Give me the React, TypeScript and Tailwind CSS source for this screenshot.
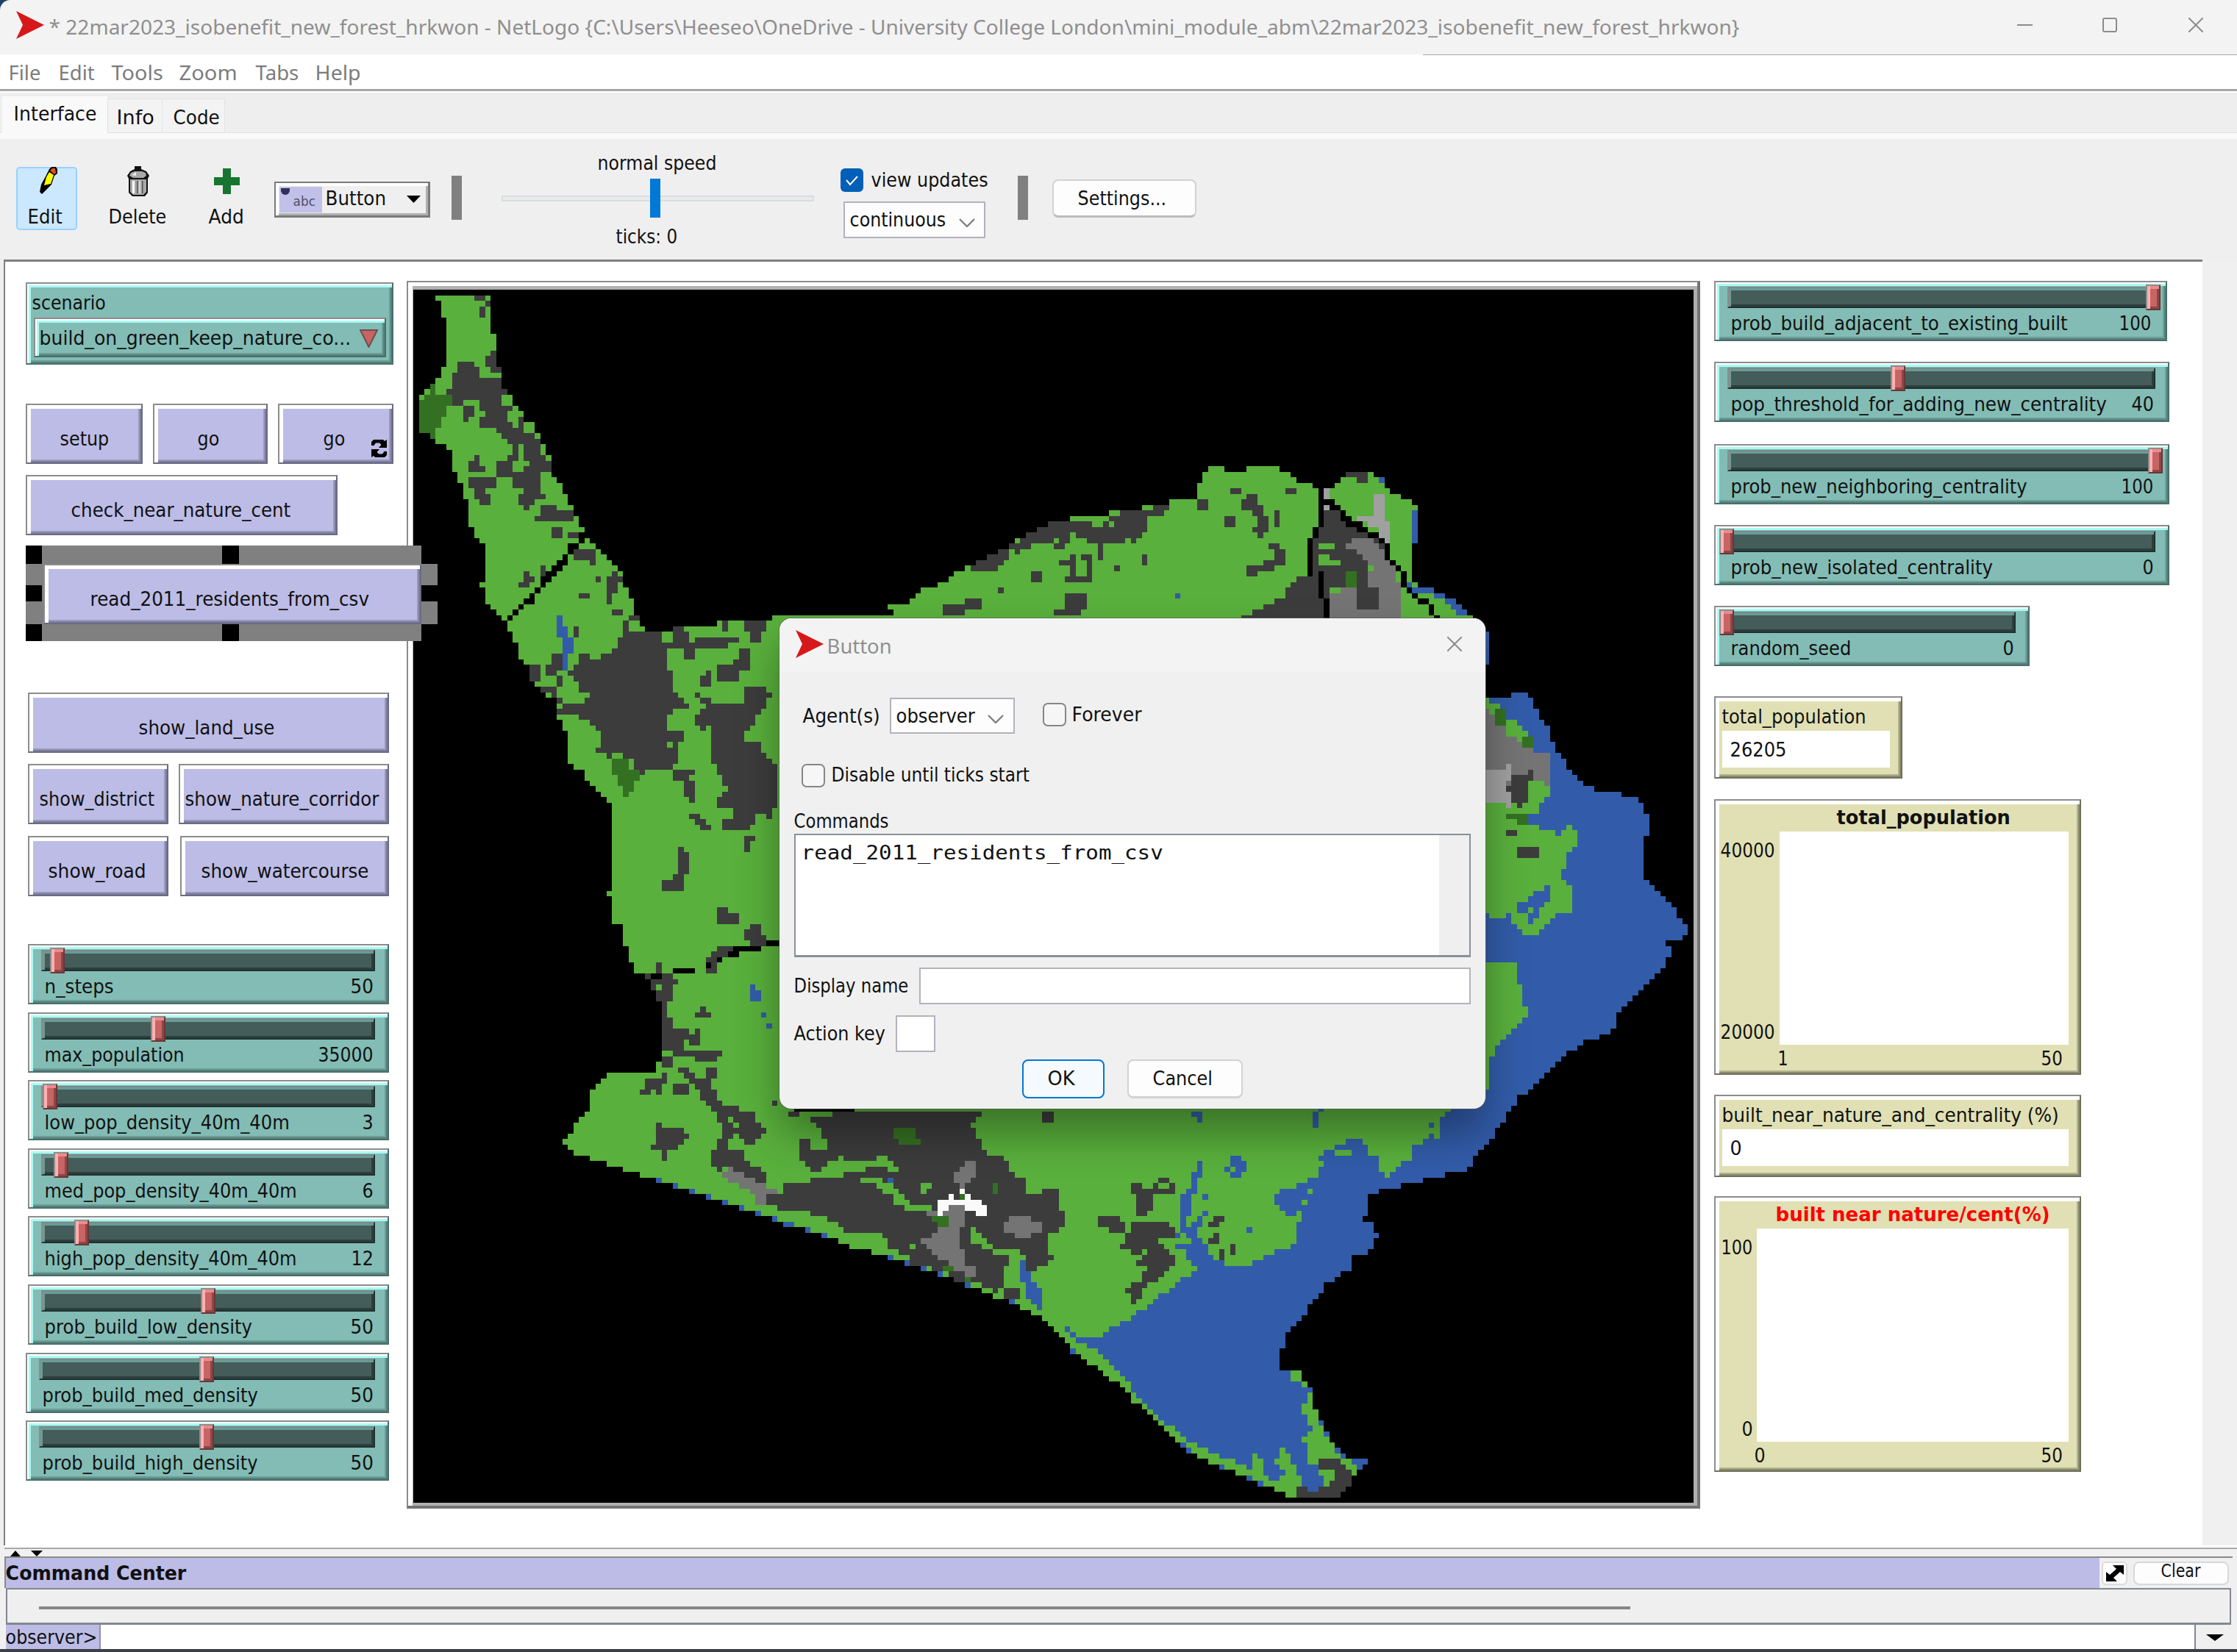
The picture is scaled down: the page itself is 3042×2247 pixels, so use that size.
import { useLayoutEffect, useRef, useState } from "react";
import type { ReactNode } from "react";

/* ---------- Patch world: polygons rasterised onto the NetLogo grid ---------- */

const COLS = 232;
const ROWS = 220;
const CELL = 7.5;
const world = new Uint8Array(COLS * ROWS);
const PALETTE = ["#000000", "#59b03c", "#3c3c3c", "#347022", "#747474", "#a0a0a0", "#325ca9", "#fafafa"];
const [BLACK, GREEN, DARK, FOREST, GREY, LIGHT, BLUE, WHITE] = [0, 1, 2, 3, 4, 5, 6, 7];

// Every sheet has its own origin and drawing scale: [x, y, scaleX, scaleY]
type Sheet = [number, number, number, number];
const NW: Sheet = [550, 380, 2.529, 1.568];
const SW: Sheet = [750, 1300, 1.568, 2.063];
const E: Sheet = [1160, 600, 1.3635, 1.074];
const SE: Sheet = [1540, 1500, 3, 2.8];

const toCell = (s: Sheet, x: number, y: number) => [
  (s[0] + x / s[2] - 562.4) / CELL,
  (s[1] + y / s[3] - 393.9) / CELL,
];

function parse(s: Sheet, text: string) {
  const n = text.trim().split(/[\s,]+/).map(Number);
  const pts: number[][] = [];
  for (let i = 0; i + 1 < n.length; i += 2) pts.push(toCell(s, n[i], n[i + 1]));
  return pts;
}

function put(c: number, r: number, color: number) {
  if (c >= 0 && r >= 0 && c < COLS && r < ROWS) world[r * COLS + c] = color;
}

function poly(s: Sheet, color: number, text: string) {
  const p = parse(s, text);
  for (let r = 0; r < ROWS; r++) {
    const y = r + 0.5;
    const xs: number[] = [];
    for (let i = 0; i < p.length; i++) {
      const a = p[i];
      const b = p[(i + 1) % p.length];
      if (a[1] <= y !== b[1] <= y) xs.push(a[0] + ((y - a[1]) / (b[1] - a[1])) * (b[0] - a[0]));
    }
    xs.sort((m, n) => m - n);
    for (let k = 0; k + 1 < xs.length; k += 2)
      for (let c = Math.ceil(xs[k] - 0.5); c + 0.5 < xs[k + 1]; c++) put(c, r, color);
  }
}

function rects(s: Sheet, color: number, text: string) {
  const p = parse(s, text);
  for (let i = 0; i + 1 < p.length; i += 2) {
    const c0 = Math.round(p[i][0]);
    const r0 = Math.round(p[i][1]);
    const c1 = Math.max(c0 + 1, Math.round(p[i + 1][0]));
    const r1 = Math.max(r0 + 1, Math.round(p[i + 1][1]));
    for (let r = r0; r < r1; r++) for (let c = c0; c < c1; c++) put(c, r, color);
  }
}

function line(s: Sheet, color: number, text: string) {
  const p = parse(s, text);
  for (let i = 0; i + 1 < p.length; i++) {
    const n = Math.ceil(Math.max(Math.abs(p[i + 1][0] - p[i][0]), Math.abs(p[i + 1][1] - p[i][1]))) || 1;
    for (let k = 0; k <= n; k++)
      put(
        Math.floor(p[i][0] + ((p[i + 1][0] - p[i][0]) * k) / n),
        Math.floor(p[i][1] + ((p[i + 1][1] - p[i][1]) * k) / n),
        color,
      );
  }
}

function dots(s: Sheet, color: number, text: string) {
  for (const [x, y] of parse(s, text)) put(Math.floor(x), Math.floor(y), color);
}

// Land
poly(NW, GREEN, "108,34 297,34 297,116 316,116 316,187 335,187 335,235 354,246 372,246 374,270 392,270 410,300 448,306 450,328 467,328 469,352 487,352 489,376 505,376 506,422 525,422 543,435 545,457 562,459 564,482 581,484 583,505 600,507 602,528 619,530 619,540 600,545 600,565 620,563 622,552 640,552 640,563 657,575 695,587 714,598 733,610 735,622 752,633 754,657 771,657 773,680 790,682 792,715 808,727 830,745 850,752 942,752 960,740 1075,740 1077,728 1265,728 1265,717 1568,717 1568,1568 885,1568 885,1538 867,1538 865,1515 848,1515 846,1490 828,1480 792,1480 790,1457 771,1457 771,1422 752,1422 752,1375 714,1375 714,1316 695,1316 695,1304 714,1304 714,1115 695,1115 676,1092 638,1080 620,1068 620,1045 583,1045 564,1021 562,962 545,960 543,938 525,938 525,892 487,890 468,870 430,858 430,822 411,820 392,810 390,775 373,773 371,752 354,750 354,727 335,727 316,712 297,702 278,690 278,657 260,657 260,645 278,645 278,563 260,563 240,550 238,528 221,528 221,470 203,468 201,435 184,435 182,410 165,410 163,364 146,362 144,350 108,350 90,338 88,327 51,327 51,247 70,235 90,225 108,210 127,205 127,187 146,185 146,80 127,80 127,45 108,45");
poly(SW, GREEN, "165,0 520,0 520,430 1550,430 1550,1505 1520,1480 1490,1465 1460,1450 1425,1430 1390,1412 1365,1395 1345,1370 1320,1340 1295,1315 1270,1280 1240,1250 1215,1210 1185,1180 1165,1150 1130,1132 1115,1115 1100,1075 1060,1035 1010,985 955,960 915,940 885,925 830,895 795,880 760,863 720,848 650,820 585,790 540,770 475,740 440,725 400,705 365,690 330,678 295,660 225,630 165,605 130,590 95,573 60,558 36,545 24,525 24,515 36,510 48,495 48,468 70,450 83,437 83,377 95,360 118,340 120,329 224,327 224,298 236,290 236,128 224,125 212,80 200,62 200,50 178,48 178,18 165,18");
const EAST = "1220,375 1220,367 1250,367 1260,385 1270,400 1290,420 1300,445 1325,475 1350,497 1375,510 1400,515 1425,515 1455,525 1475,545 1475,575 1465,580 1465,632 1485,650 1525,680 1535,700 1547,707 1547,720 1530,730 1507,730 1507,737 1515,740 1507,765 1480,785 1420,835 1405,865 1375,872 1350,880 1310,905 1280,925 1220,970 1210,990 1180,1025 1150,1060 1130,1070 1060,1080 1010,1090 955,1100 945,1135 965,1140 965,1155 973,1162 955,1185 925,1190 920,1210 870,1235 840,1275 800,1305 790,1325 790,1357";
poly(E, GREEN, "0,255 75,255 65,240 105,235 125,215 175,205 205,185 250,170 285,155 315,140 345,125 390,115 430,110 495,102 550,95 585,88 635,82 640,68 650,50 660,38 690,38 690,45 730,45 730,38 790,38 800,45 825,58 850,65 880,68 905,60 912,48 935,40 945,45 975,50 985,65 1015,80 1035,90 1045,100 1045,150 1035,155 1035,200 1055,215 1075,215 1100,230 1120,240 1140,255 1173,275 1178,325 1173,375 " + EAST + " 545,1420 500,1385 460,1345 410,1335 380,1300 330,1270 270,1250 0,1150");
rects(E, BLACK, "1174,325 1180,372");

// Sea
poly(E, BLUE, "1173,375 " + EAST + " 790,1500 600,1445 550,1405 500,1365 450,1330 425,1318 410,1310 465,1308 480,1295 510,1285 545,1270 580,1250 610,1230 635,1212 640,1200 610,1180 600,1160 650,1175 660,1190 690,1203 740,1203 765,1190 820,1175 820,1145 830,1140 832,1115 850,1110 860,1090 865,1050 875,1040 905,1037 905,1025 945,1020 950,1035 975,1050 990,1075 1010,1065 1040,1045 1065,1025 1085,1010 1100,985 1115,975 1173,960 1178,905 1190,890 1210,870 1235,850 1250,840 1240,810 1230,765 1173,762 1173,690 1200,697 1215,690 1235,715 1255,725 1290,705 1300,690 1330,685 1330,650 1315,635 1325,605 1342,590 1342,565 1325,562 1310,575 1290,568 1255,560 1275,530 1290,515 1290,460 1265,440 1250,430 1235,415 1210,400 1195,385");
rects(E, BLUE, "597,222 606,230 975,52 985,60 1037,100 1045,150 1173,280 1180,325 392,1295 402,1302 400,1305 410,1312 1025,207 1040,214 1040,214 1078,220 1078,222 1098,230 1098,230 1115,238 1108,237 1128,245 1120,245 1140,252");
poly(E, BLUE, "1230,672 1265,665 1265,655 1290,652 1290,670 1270,685 1270,700 1245,705 1250,690 1262,680 1230,690");
poly(SW, BLUE, "1000,855 1010,855 1010,870 1022,900 1022,915 1034,915 1034,930 1047,933 1047,992 1034,992 1034,975 1010,960 1010,915 1000,912");
poly(NW, BLUE, "525,716 543,716 543,740 562,740 562,763 581,763 581,797 562,797 562,832 525,832 525,820 543,820 543,763 525,763 525,750 543,740 525,740");
rects(NW, BLUE, "1188,1503 1208,1538 1208,1515 1225,1538");
rects(SW, BLUE, "447,158 458,173 458,190 470,205");

// Bay and headland
rects(SE, BLACK, "0,0 1565,1567");
const BAY = "1560,0 1560,10 1545,12 1545,32 1523,34 1523,75 1500,75 1500,96 1478,96 1478,138 1456,138 1456,159 1433,159 1433,180 1410,180 1410,202 1388,202 1388,243 1365,243 1365,264 1275,264 1275,285 1186,285 1186,306 1096,306 1096,327 1005,327 1005,348 960,348 960,432 938,432 938,453 982,453 982,495 1005,495 1005,516 982,516 982,558 960,558 960,579 893,579 893,642 848,642 848,663 825,663 825,684 780,684 780,726 757,726 757,747 735,747 735,768 712,768 712,810 690,810 690,831 667,831 667,852 645,852 645,873 622,873 622,936 600,936 600,1020 ";
poly(SE, GREEN, "0,0 " + BAY + "690,1020 690,1062 712,1062 712,1083 735,1083 735,1167 757,1167 757,1209 780,1209 780,1251 802,1251 802,1293 825,1293 825,1314 847,1314 847,1335 870,1335 870,1356 960,1356 960,1377 938,1377 938,1398 915,1398 915,1419 893,1419 893,1461 870,1461 870,1482 847,1482 847,1503 622,1503 622,1482 577,1482 577,1461 510,1461 510,1440 465,1440 465,1419 420,1419 420,1398 353,1398 353,1377 307,1377 307,1356 262,1356 262,1335 218,1335 218,1314 196,1314 196,1293 173,1293 173,1272 150,1272 150,1251 128,1251 128,1230 105,1230 105,1209 82,1209 82,1188 60,1188 60,1167 37,1167 37,1146 0,1146");
poly(SE, BLUE, "0,810 15,810 15,789 60,789 60,768 82,768 82,747 105,747 105,726 150,726 150,705 173,705 173,684 196,684 196,663 240,663 240,642 262,642 262,621 240,621 240,600 218,600 218,558 173,558 173,537 240,537 240,516 218,516 218,495 196,495 196,348 218,348 218,327 240,327 240,264 262,264 262,222 285,222 285,285 262,285 262,348 240,348 240,432 218,432 218,474 240,474 240,453 262,453 262,432 285,432 285,474 262,474 262,516 285,516 285,537 307,537 307,579 330,579 330,600 375,600 375,621 488,621 488,600 533,600 533,579 577,579 577,558 645,558 645,537 667,537 667,453 690,453 690,411 667,411 667,432 622,432 622,411 600,411 600,390 577,390 577,348 600,348 600,327 667,327 667,306 712,306 712,285 757,285 757,243 780,243 780,222 757,222 757,202 780,202 780,180 825,180 825,159 870,159 870,138 938,138 938,159 960,159 960,202 1005,202 1005,264 1028,264 1028,285 1050,285 1050,264 1073,264 1073,243 1096,243 1096,222 1141,222 1141,159 1186,159 1186,138 1208,138 1208,117 1253,117 1253,54 1275,54 1275,33 1298,33 1298,0 " + BAY + "645,1020 645,1062 690,1062 690,1083 735,1083 735,1104 712,1104 712,1146 690,1146 690,1188 712,1188 712,1230 735,1230 735,1251 712,1251 712,1272 690,1272 690,1293 712,1293 712,1377 757,1377 757,1419 780,1419 780,1461 757,1461 757,1482 712,1482 712,1461 690,1461 690,1419 667,1419 667,1377 645,1377 645,1335 622,1335 622,1314 600,1314 600,1356 577,1356 577,1377 600,1377 600,1398 622,1398 622,1419 600,1419 600,1440 555,1440 555,1419 533,1419 533,1356 510,1356 510,1335 488,1335 488,1398 465,1398 465,1377 420,1377 420,1356 353,1356 353,1335 307,1335 307,1314 262,1314 262,1293 218,1293 218,1272 196,1272 196,1251 173,1251 173,1230 128,1230 128,1209 105,1209 105,1188 82,1188 82,1167 60,1167 60,1146 37,1146 37,1125 15,1125 15,1104 0,1104");
rects(SE, BLUE, "240,22 262,54 262,33 285,75 735,22 757,96 757,12 780,33 397,202 442,285 442,222 465,264 375,243 397,264 285,348 307,369 285,411 307,432 465,474 488,495 173,495 196,516 1208,75 1230,96 757,1209 780,1230 780,1251 802,1272 825,1314 847,1335 847,1335 870,1356 893,1356 960,1377 915,1377 938,1398 196,1293 218,1314 218,1314 240,1335 353,1377 375,1398 465,1419 488,1440 510,1440 533,1461");
rects(SE, GREEN, "825,180 893,202 712,327 735,348 690,369 712,390 397,243 420,264 1208,96 1230,117 1230,117 1253,138 690,1062 712,1083");
poly(SE, DARK, "757,1356 847,1356 847,1377 870,1377 870,1398 893,1398 893,1461 870,1461 870,1482 847,1482 847,1503 667,1503 667,1461 712,1461 712,1482 757,1482 757,1461 802,1461 802,1440 825,1440 825,1398 757,1398");

// Built-up land, north west
poly(NW, DARK, "182,176 241,176 241,187 260,187 260,210 335,210 335,235 354,235 354,246 335,246 335,270 372,270 354,280 354,305 392,317 392,295 410,295 410,327 448,327 467,340 467,352 469,375 487,375 487,388 505,388 505,410 467,410 467,457 487,460 487,468 448,470 430,480 430,490 411,490 392,480 392,457 411,457 411,445 373,445 373,422 316,422 316,388 354,388 354,375 373,375 373,352 354,340 335,328 316,328 316,317 260,315 260,290 278,290 278,280 260,280 260,258 203,258 200,268 165,268 163,245 146,245 146,235 165,222 165,200 182,198");
poly(NW, GREEN, "392,352 411,352 411,388 430,388 430,398 392,410 354,400 373,388 392,388");
rects(NW, DARK, "241,34 278,45 278,45 297,57 260,57 278,80 506,528 543,550 564,540 600,550 467,610 487,633 657,633 676,645 600,668 638,680 714,705 752,716 583,740 600,763 525,845 543,868 525,892 543,905 1094,728 1112,750");
poly(NW, DARK, "297,152 316,152 316,187 335,187 335,200 316,200 297,187 278,187 278,163 297,163");
poly(NW, DARK, "203,268 241,268 241,292 221,292 221,304 203,304");
poly(NW, DARK, "221,388 241,388 241,376 260,376 260,388 278,400 278,410 221,410");
poly(NW, DARK, "221,422 316,422 316,445 278,445 278,457 297,457 297,480 260,480 241,468 241,445 221,445");
poly(NW, DARK, "467,482 525,482 525,493 581,493 581,516 448,516 448,505 467,505");
poly(NW, DARK, "581,575 657,575 657,608 638,608 638,598 581,598");
poly(NW, DARK, "411,622 430,622 430,633 448,633 448,645 430,645 430,657 392,657 392,647 411,647");
poly(NW, DARK, "714,622 733,622 733,633 752,633 752,645 733,645 733,668 714,668 714,692 695,692 695,633 714,633");
poly(NW, DARK, "752,728 771,728 771,716 808,716 808,728 780,728 771,740 790,752 885,752 885,775 923,775 923,763 942,763 923,752 923,740 960,740 980,752 980,775 1018,763 1055,763 1055,788 998,788 998,808 960,808 960,785 923,785 905,797 905,832 923,832 923,858 905,868 942,880 960,892 980,905 980,916 960,916 923,920 905,935 905,962 960,962 960,985 942,995 942,1030 923,1045 885,1045 867,1035 848,1045 828,1055 808,1055 790,1030 733,1010 714,1010 714,1020 695,1020 676,1005 657,1005 676,985 676,962 657,962 657,950 638,940 600,935 600,920 581,927 525,927 525,916 562,905 600,905 620,892 638,885 600,885 600,858 562,845 581,832 600,808 600,800 638,800 638,808 676,808 695,797 733,785 733,763 752,763");
rects(NW, GREEN, "885,752 923,773 905,985 923,997");
poly(NW, DARK, "430,822 467,822 467,845 448,858 430,845");
poly(NW, DARK, "468,870 525,868 525,892 487,880");
poly(NW, DARK, "487,832 506,800 543,800 543,820 525,840 487,845");
poly(NW, DARK, "1170,728 1245,728 1245,750 1225,752 1225,773 1190,773 1190,752 1170,750");
poly(NW, DARK, "1055,763 1150,763 1150,773 1112,773 1112,785 1055,785");
poly(NW, DARK, "1152,788 1188,788 1188,832 1150,832 1150,855 1075,855 1075,822 1130,822 1130,810 1152,810");
poly(NW, DARK, "1037,835 1055,835 1055,858 1037,868 1018,868 1018,845 1037,845");
poly(NW, DARK, "998,880 1018,880 1018,892 1055,892 1075,905 1150,905 1170,892 1150,880 1170,870 1245,870 1263,885 1245,892 1245,905 1225,916 1208,930 1208,950 1170,962 1170,985 1225,985 1225,1005 1263,1020 1263,1035 1290,1035 1290,1127 1263,1127 1263,1150 1225,1140 1208,1150 1188,1172 1094,1172 1094,1150 1130,1150 1130,1127 1075,1127 1075,1103 1112,1085 1094,1068 1075,1045 1055,1030 1055,950 1018,962 998,950 1018,935 998,935 998,927 1037,916 1037,905 998,892");
poly(NW, DARK, "923,1045 960,1045 960,1035 980,1045 998,1050 980,1060 998,1080 998,1115 980,1115 960,1103 960,1080 942,1068 923,1068");
poly(NW, DARK, "980,1140 1018,1140 1018,1150 1055,1162 1055,1172 1018,1172 998,1160 980,1150");
poly(NW, DARK, "1170,1186 1208,1186 1208,1197 1188,1197 1188,1220 1170,1220");
poly(NW, DARK, "942,1210 960,1210 960,1220 980,1220 980,1268 960,1268 960,1304 942,1304 942,1292 923,1304 885,1304 885,1280 923,1280 923,1268 942,1268");
poly(NW, DARK, "1075,1340 1112,1340 1112,1352 1150,1352 1150,1363 1130,1375 1075,1375");
poly(NW, DARK, "1170,1387 1208,1375 1225,1375 1225,1387 1245,1398 1263,1410 1245,1420 1208,1418 1170,1410");
poly(NW, DARK, "1037,1450 1075,1425 1150,1418 1130,1440 1075,1450 1055,1480 1037,1475");
line(NW, BLACK, "1290,1415 1250,1412");
line(NW, BLACK, "1225,1428 1150,1428 1122,1440");
dots(NW, BLACK, "1045,1463");
poly(NW, DARK, "867,1457 885,1457 885,1480 923,1480 923,1492 942,1500 923,1515 923,1538 905,1545 905,1568 885,1568 885,1538 867,1530 867,1515 848,1515 848,1492 828,1480 867,1480");
rects(NW, BLACK, "923,1468 998,1480 848,1480 885,1492");
line(NW, BLACK, "588,563 572,580 553,588 553,600 530,610 515,620 497,634 478,645 458,662 440,675 420,687 400,698 382,710 363,722");
line(NW, BLACK, "553,588 535,602 510,618 495,634");
poly(NW, FOREST, "90,222 108,222 108,235 127,247 163,247 163,268 146,268 146,290 127,292 127,315 108,317 108,338 90,338 90,327 51,327 51,258 70,247 90,235");
poly(NW, FOREST, "714,1021 771,1021 771,1035 790,1045 808,1055 808,1065 790,1070 790,1090 771,1103 752,1103 752,1090 733,1080 733,1055 714,1055");

// Built-up land, south west
poly(SW, DARK, "224,20 236,20 236,50 258,50 258,65 270,65 270,80 258,80 258,127 247,127 247,175 258,175 258,206 290,206 290,220 305,220 305,206 318,206 318,250 295,250 290,235 282,235 282,265 364,267 364,282 352,297 305,297 305,283 258,283 258,312 236,312 236,283 247,265 247,250 236,265 236,127 224,127 224,95 212,95 212,65 200,62 200,50 224,50");
rects(SW, GREEN, "236,265 258,283 224,80 236,95");
rects(SW, DARK, "330,0 352,20 330,35 352,50 506,430 528,452 470,405 482,422 1047,437 1070,467");
rects(SW, BLACK, "258,35 305,50 330,20 341,35 352,5 364,18 212,50 236,65");
poly(SW, DARK, "318,144 330,144 330,158 341,158 341,173 305,173 305,158 318,158");
poly(SW, DARK, "236,327 247,327 247,355 236,360 236,390 224,390 212,375 212,390 188,390 188,375 200,370 200,350 224,345");
poly(SW, DARK, "270,313 295,313 295,328 330,345 330,313 352,313 352,343 341,343 341,375 352,375 352,400 364,420 400,422 400,437 435,440 435,465 445,480 458,485 458,495 445,500 435,528 411,528 411,515 388,500 376,515 364,530 388,545 411,545 411,575 435,590 458,610 458,640 435,640 411,625 388,607 376,595 352,605 341,590 341,545 352,545 352,515 364,515 364,480 352,465 341,420 318,405 318,375 305,360 290,345 270,328");
poly(SW, DARK, "258,360 295,360 295,375 282,390 270,390 258,375");
poly(SW, DARK, "224,468 236,468 236,483 282,485 293,500 293,515 282,515 270,545 247,545 247,575 236,575 236,545 212,545 212,530 224,525");
rects(SW, GREEN, "376,452 388,467 388,467 400,483 388,530 400,545");
poly(SW, DARK, "490,640 555,640 555,625 625,622 625,610 670,610 670,592 705,595 740,605 740,592 716,562 693,562 680,577 635,577 620,565 600,577 575,592 575,607 553,607 553,592 530,575 530,515 553,515 553,545 588,545 588,530 576,500 565,470 553,452 588,452 600,437 650,435 650,430 928,430 916,452 905,455 893,480 905,485 905,515 916,515 928,560 963,562 975,577 975,607 1010,625 1010,670 1045,670 1045,655 1080,655 1080,715 1092,717 1092,762 1080,778 1058,778 1058,825 1068,840 1068,855 1045,865 1034,885 1010,885 1010,855 998,825 950,825 940,808 928,800 916,775 893,762 893,792 905,808 940,830 975,840 975,870 963,870 963,930 950,945 916,925 885,915 860,910 860,900 830,885 795,870 765,860 765,840 720,820 716,795 695,778 640,778 600,745 575,735 553,720 540,715 482,710 458,697 458,670 490,668");
poly(SW, GREEN, "660,622 705,622 716,640 740,655 753,670 765,685 775,700 810,705 820,715 755,715 740,700 730,685 716,665 705,655 680,635 660,635");
rects(SW, GREEN, "788,640 810,655 788,652 800,668 765,808 777,822");
rects(SW, BLUE, "424,80 435,127 435,95 447,127 718,622 730,637");
poly(SW, DARK, "963,945 975,930 998,930 998,960 975,965 963,955");
poly(SW, GREY, "376,592 388,592 388,607 411,607 411,622 435,622 435,640 458,640 458,655 482,655 482,670 458,670 458,700 435,700 435,670 411,655 388,640 376,625 364,610");
poly(SW, GREY, "882,577 905,577 905,622 893,622 893,640 870,640 858,630 858,607 870,605");
poly(SW, GREY, "848,700 882,700 882,760 870,770 870,822 882,830 882,855 893,870 905,880 905,900 882,900 870,885 848,870 835,855 823,845 812,822 800,810 788,800 800,790 823,775 823,760 848,755 848,730 812,730 800,720 823,715 835,700");
poly(SW, GREY, "975,732 1022,732 1022,747 1045,747 1045,775 1022,778 1022,792 987,792 987,778 963,775 963,747 975,745");
rects(SW, GREY, "870,640 882,655");
rects(SW, WHITE, "823,685 835,730 835,685 848,715 848,670 858,700 858,685 882,700 870,655 882,670 882,670 893,715 893,685 916,715 905,700 928,730");
rects(SW, FOREST, "730,485 775,515 740,512 788,528 940,640 952,668 870,670 882,685 812,732 847,747 823,747 847,760 835,870 858,885 882,900 893,915");
dots(SW, BLUE, "230,630 265,646 300,662 335,677 370,692 405,708 440,723 475,738 500,754 510,754 547,769 582,784 722,846 760,862 795,878 830,893 887,924 982,970 1110,1108");

// Built-up land, south
poly(SW, DARK, "1235,640 1258,640 1258,655 1282,655 1282,640 1294,640 1294,625 1318,625 1318,640 1330,640 1330,668 1305,668 1282,668 1282,700 1270,715 1270,728 1247,728 1247,670 1235,670");
rects(SE, GREEN, "105,306 150,327");
poly(SW, DARK, "1165,732 1212,732 1212,747 1224,747 1224,775 1200,778 1188,765 1165,762");
poly(SW, DARK, "1235,747 1318,747 1318,762 1330,765 1330,792 1294,795 1294,808 1318,820 1318,840 1330,855 1318,870 1318,885 1294,900 1282,915 1270,930 1258,945 1247,975 1235,975 1235,960 1224,945 1235,930 1235,915 1258,910 1258,885 1270,870 1247,860 1258,840 1270,825 1235,840 1235,825 1212,820 1224,795 1224,775 1235,770");
rects(SE, DARK, "330,432 375,453 307,453 353,474 330,495 353,516 307,516 353,537 353,558 375,600 397,537 420,579");

// North east
poly(E, DARK, "215,185 250,170 285,155 320,140 345,125 390,115 435,118 460,125 495,102 550,97 585,93 575,105 545,110 545,130 525,140 515,155 495,148 470,150 430,145 400,145 390,155 345,150 310,160 285,170 265,187 240,190");
rects(E, GREEN, "285,160 295,168 440,112 455,122 470,115 485,122 370,138 380,150 405,132 412,145 500,140 508,150");
rects(E, DARK, "400,165 410,195 385,175 400,185 420,165 445,172 395,195 440,203 430,175 440,195 270,213 280,222 330,190 350,203 535,165 545,180 485,182 495,190 640,85 660,98 690,107 708,123 780,100 790,123 700,68 718,76 800,68 820,76 730,182 750,197 455,150 465,170");
poly(E, DARK, "390,220 430,220 430,245 415,255 375,255 375,245 395,240");
poly(E, DARK, "170,237 205,240 205,232 240,232 240,243 215,243 205,252 170,250");
poly(E, DARK, "720,85 735,78 750,78 760,100 770,110 770,125 755,140 740,135 750,110 720,97");
poly(E, DARK, "770,145 790,150 800,165 800,178 780,185 755,190 750,180 785,172 770,155");
poly(E, DARK, "870,95 895,100 935,120 985,150 985,160 950,160 950,175 965,205 975,235 960,245 930,240 925,215 885,215 885,258 720,258 760,240 800,230 800,215 825,200 850,195 850,135 865,120");
poly(E, GREY, "920,140 960,145 985,160 1005,190 1017,215 1017,258 885,258 885,220 930,215 935,240 970,245 970,215 950,205 962,185 945,165 915,158");
rects(E, DARK, "935,210 973,243");
poly(E, LIGHT, "965,80 985,80 985,110 1000,130 1000,148 975,148 970,125 935,118 935,110 965,105");
rects(E, LIGHT, "873,68 883,85 873,93 883,100");
rects(E, FOREST, "915,190 935,210");
rects(E, GREEN, "865,150 890,158 860,165 878,180 885,172 903,182 1018,230 1030,258");
rects(E, DARK, "935,48 955,58 910,48 930,53");
line(E, BLACK, "868,60 867,90 866,120 853,140 848,150 846,195");
line(E, BLACK, "868,190 870,225 877,232 878,255");
line(E, BLACK, "878,85 900,98 920,112 955,135 985,152 1000,175 1018,195 1022,208 1048,230 1068,243 1085,255");
line(E, BLACK, "910,112 935,128");

// East coast
poly(E, GREY, "1173,390 1190,400 1215,430 1245,440 1265,455 1290,455 1290,510 1270,490 1250,500 1215,500 1200,475 1173,480");
poly(E, LIGHT, "1173,480 1215,475 1230,490 1210,500 1225,520 1215,532 1173,525");
poly(E, DARK, "1225,490 1260,480 1260,495 1245,500 1250,520 1235,535 1220,530 1212,505");
rects(E, FOREST, "1190,390 1215,412 1240,433 1265,450 1215,540 1250,548 1230,548 1250,555");
rects(E, DARK, "1210,568 1230,577 1230,595 1270,607");
rects(E, BLUE, "1262,440 1290,455 1255,540 1275,560");

const layers = PALETTE.map((_, color) => {
  let d = "";
  if (color === BLACK) return d;
  for (let r = 0; r < ROWS; r++)
    for (let c = 0; c < COLS; c++) {
      if (world[r * COLS + c] !== color) continue;
      const start = c;
      while (c < COLS && world[r * COLS + c] === color) c++;
      d += `M${start} ${r}h${c - start}v1h${start - c}z`;
    }
  return d;
});

function World() {
  return (
    <svg viewBox={`0 0 ${COLS} ${ROWS}`} preserveAspectRatio="none" shapeRendering="crispEdges" className="block h-full w-full bg-black">
      {layers.map((d, i) => (
        <path key={i} d={d} fill={PALETTE[i]} />
      ))}
    </svg>
  );
}

/* ---------- Text ---------- */

const UI = "font-['DejaVu_Sans',sans-serif] text-[27px] leading-[28px]";
const SEGOE = "font-['Noto_Sans',sans-serif] text-[28px] leading-[28px]";
const MONO = "font-['DejaVu_Sans_Mono',monospace] text-[27px] leading-[28px]";

// A single line of text condensed or widened to occupy w pixels.
function T({ w, children, className = "", font = UI }: { w: number; children: ReactNode; className?: string; font?: string }) {
  const ref = useRef<HTMLSpanElement>(null);
  const [k, setK] = useState(1);
  useLayoutEffect(() => {
    if (ref.current) setK(w / ref.current.offsetWidth);
  }, [w]);
  return (
    <span className={`block h-[28px] shrink-0 whitespace-nowrap ${font} ${className}`} style={{ width: w }}>
      <span ref={ref} className="inline-block origin-left whitespace-pre" style={{ transform: `translateX(-0.4px) scaleX(${k})` }}>
        {children}
      </span>
    </span>
  );
}

/* ---------- NetLogo widgets ---------- */

const PURPLE =
  "bg-[#bcbce6] border-t-2 border-l-2 border-r-2 border-b-2 border-t-[#8c8c8c] border-l-[#8c8c8c] border-r-[#6a6a86] border-b-[#6a6a86] shadow-[inset_5px_5px_0_#fff,inset_-2px_-2px_0_#7c7c9a,inset_-4px_-4px_0_#9a9abe]";
const TEAL =
  "bg-[#82bcb5] border-2 border-t-[#8c8c8c] border-l-[#8c8c8c] border-r-[#4a6f6b] border-b-[#4a6f6b] shadow-[inset_2px_2px_0_#fff,inset_5px_5px_0_#a9fbf4,inset_-2px_-2px_0_#56807b,inset_-4px_-4px_0_#6c9f99]";
const OLIVE =
  "bg-[#e0e0b4] border-2 border-t-[#8c8c8c] border-l-[#8c8c8c] border-r-[#70705a] border-b-[#70705a] shadow-[inset_5px_5px_0_#fff,inset_-2px_-2px_0_#8a8a6e,inset_-4px_-4px_0_#b3b38f]";

function Btn({ box, w, children }: { box: string; w: number; children: string }) {
  return (
    <div className={`flex h-[82px] shrink-0 pt-[32px] ${box} ${PURPLE}`}>
      <T w={w}>{children}</T>
    </div>
  );
}

type SliderProps = { label: string; w: number; value: string; vw: number; thumb: number; box?: string };

function Slider({ label, w, value, vw, thumb, box = "w-[491px]" }: SliderProps) {
  return (
    <div className={`h-[82px] shrink-0 pt-[6px] pr-[17px] pl-[16px] ${box} ${TEAL}`}>
      <div className="relative h-[29px] border-2 border-t-[#7c8a88] border-r-[#20302e] border-b-[#20302e] border-l-[#8c8c8c] bg-[#445d5a] shadow-[inset_3px_0_0_#6b9b95,inset_0_3px_0_#6b9b95,inset_0_-3px_0_#2c3f3d,inset_-3px_0_0_#2c3f3d]">
        <div
          className="absolute -top-[5px] h-[35px] w-[20px] border-2 border-t-[#8c8c8c] border-r-[#6a3636] border-b-[#6a3636] border-l-[#8c8c8c] bg-[#c86464] shadow-[inset_4px_0_0_#ffb0b0,inset_0_4px_0_#f08a8a,inset_-3px_-3px_0_#8c4646]"
          style={{ left: thumb }}
        />
      </div>
      <div className="mt-[7px] flex justify-between pr-[2px] pl-[5px]">
        <T w={w}>{label}</T>
        <T w={vw}>{value}</T>
      </div>
    </div>
  );
}

function Monitor({ box, label, w, value, vw }: { box: string; label: string; w: number; value: string; vw: number }) {
  return (
    <div className={`h-[112px] shrink-0 pt-[12px] pr-[15px] pl-[9px] ${box} ${OLIVE}`}>
      <T w={w}>{label}</T>
      <div className="mt-[5px] h-[50px] bg-white pt-[12px] pl-[11px]">
        <T w={vw}>{value}</T>
      </div>
    </div>
  );
}

function Plot({
  box, title, axis, top, topW, bottom, bottomW, left, leftW, gap,
}: {
  box: string; title: ReactNode; axis: string; top: string; topW: number; bottom: string; bottomW: number; left: string; leftW: number; gap: string;
}) {
  return (
    <div className={`flex h-[375px] w-[499px] shrink-0 flex-col pt-[9px] pr-[15px] pl-[4px] ${box} ${OLIVE}`}>
      {title}
      <div className="mt-[5px] flex h-[290px]">
        <div className={`flex flex-col items-end justify-between pt-[12px] pb-[3px] ${axis}`}>
          <T w={topW}>{top}</T>
          <T w={bottomW}>{bottom}</T>
        </div>
        <div className="flex-1 bg-white" />
      </div>
      <div className={`flex justify-between pt-[5px] pr-[8px] ${gap}`}>
        <T w={leftW}>{left}</T>
        <T w={29}>50</T>
      </div>
    </div>
  );
}

/* ---------- Icons ---------- */

function Arrow() {
  return (
    <svg width="38" height="38" viewBox="0 0 38 38" className="shrink-0" fill="#d7181b">
      <path d="M0 0L38 19L0 38L9 19Z" />
    </svg>
  );
}

function Cross() {
  return (
    <svg width="20" height="20" viewBox="0 0 20 20" className="block" stroke="#8c8c8c" strokeWidth="2">
      <path d="M0 0L20 20M20 0L0 20" />
    </svg>
  );
}

function Chevron() {
  return (
    <svg width="22" height="12" viewBox="0 0 22 12" className="shrink-0" fill="none" stroke="#808080" strokeWidth="2.4">
      <path d="M1 1L11 11L21 1" />
    </svg>
  );
}

function Pencil() {
  return (
    <svg width="24" height="38" viewBox="0 0 24 38">
      <path d="M8 13L13 3L16 0H22L24 3V9L20 12L16 24L3 37L0 34L2 24Z" fill="#000" />
      <path d="M9 14L13 7L19 11L15 23L6 25Z" fill="#ffff00" />
      <path d="M14 5L17 2H21L22 8L20 10Z" fill="#e8521c" />
    </svg>
  );
}

function Trash() {
  return (
    <svg width="30" height="42" viewBox="0 0 30 42">
      <path d="M10 0H19V4L26 7L30 13L28 17V36L24 41H7L2 36V17L0 13L4 7L10 4Z" fill="#111" />
      <path d="M5 9L10 7H20L25 9L26 13L22 16H8L3 13Z" fill="#a8a8a8" />
      <path d="M6 12L12 8V13Z" fill="#eee" />
      <path d="M4 18H26V35L22 39H8L4 35Z" fill="#a8a8a8" />
      <path d="M7 20H10V37H7Z" fill="#fff" />
      <path d="M13 20H14.500V37H13ZM20 20H21.500V37H20Z" fill="#555" />
      <path d="M16 20H18V37H16Z" fill="#d8d8d8" />
    </svg>
  );
}

function Cycle() {
  return (
    <svg width="21" height="24" viewBox="0 0 21 24" fill="#000">
      <path d="M3 0H16L18 2L21 0V11H10L13.500 7L11 4.500H6L4 7V8H0V3Z" />
      <path d="M18 24H5L3 22L0 24V13H11L7.500 17L10 19.500H15L17 17V16H21V21Z" />
    </svg>
  );
}

/* ---------- Window parts ---------- */

function TitleBar() {
  return (
    <header className="flex h-[74px] shrink-0 rounded-tl-[14px] bg-[#f3f3f3] pt-[15px] pl-[22px]">
      <Arrow />
      <T w={2299} font={SEGOE} className="ml-[7px] mt-[7px] text-[#8f8f8f]">
        {"* 22mar2023_isobenefit_new_forest_hrkwon - NetLogo {C:\\Users\\Heeseo\\OneDrive - University College London\\mini_module_abm\\22mar2023_isobenefit_new_forest_hrkwon}"}
      </T>
      <div className="ml-[377px] mt-[18px] h-[2px] w-[21px] bg-[#8c8c8c]" />
      <div className="ml-[95px] mt-[9px] h-[20px] w-[20px] rounded-[3px] border-2 border-[#8c8c8c]" />
      <div className="ml-[97px] mt-[9px]">
        <Cross />
      </div>
    </header>
  );
}

const MENUS: [string, number, number][] = [
  ["File", 12, 44],
  ["Edit", 24, 49],
  ["Tools", 23, 70],
  ["Zoom", 22, 79],
  ["Tabs", 25, 59],
  ["Help", 22, 62],
];

function MenuBar() {
  return (
    <nav className="flex h-[47px] shrink-0 bg-white">
      {MENUS.map(([name, gap, w]) => (
        <div key={name} className="pt-[10px]" style={{ marginLeft: gap }}>
          <T w={w} font={SEGOE} className="text-[#7c7c7c]">{name}</T>
        </div>
      ))}
      <div className="ml-auto h-px w-[1107px] bg-[#a8a8a8]" />
    </nav>
  );
}

function Tabs() {
  return (
    <div className="h-[68px] shrink-0 border-t-[3px] border-[#a8a8a8] bg-[#eeeeee]">
      <div className="h-[2px] bg-white" />
      <div className="flex h-[55px] items-end border-b border-[#e2e2e2] pl-[3px]">
        <div className="-mb-px h-[50px] w-[143px] bg-[#f9f9f9] pt-[10px] pl-[16px]">
          <T w={113}>Interface</T>
        </div>
        <div className="h-[46px] w-[75px] border border-b-0 border-[#e2e2e2] bg-[#f3f3f3] pt-[11px] pl-[12px]">
          <T w={51}>Info</T>
        </div>
        <div className="h-[46px] w-[85px] border border-b-0 border-l-0 border-[#e2e2e2] bg-[#f3f3f3] pt-[11px] pl-[15px]">
          <T w={63}>Code</T>
        </div>
      </div>
      <div className="h-[8px] bg-[#f9f9f9]" />
    </div>
  );
}

function Toolbar() {
  return (
    <div className="flex h-[164px] shrink-0 bg-[#efefef]">
      <div className="mt-[38px] ml-[22px] flex h-[86px] w-[83px] flex-col items-center rounded-[5px] border-2 border-[#99d1ff] bg-[#cce8ff]">
        <div className="-mt-[2px] ml-[4px] h-[54px]">
          <Pencil />
        </div>
        <T w={47} className="-ml-[4px]">Edit</T>
      </div>
      <div className="mt-[37px] ml-[43px] flex w-[79px] flex-col items-center">
        <div className="h-[55px]">
          <Trash />
        </div>
        <T w={79}>Delete</T>
      </div>
      <div className="mt-[40px] ml-[57px] flex w-[48px] flex-col items-center">
        <svg width="35" height="35" viewBox="0 0 35 35" className="mb-[17px]" fill="#17752f">
          <path d="M12 0H23V12H35V23H23V35H12V23H0V12H12Z" />
        </svg>
        <T w={48}>Add</T>
      </div>
      <div className="mt-[58px] ml-[41px] flex h-[49px] w-[212px] border-2 border-r-[3px] border-b-[3px] border-[#7a7a7a] bg-[#efefef] pt-[5px] pl-[5px] shadow-[inset_4px_4px_0_#fff,inset_-3px_-3px_0_#b0b0b0]">
        <div className="relative h-[35px] w-[58px] bg-[#c0c0e8] pt-[6px] pl-[19px]">
          <div className="absolute top-[2px] left-[2px] h-[9px] w-[12px] rounded-b-full bg-[#30305a]" />
          <T w={30} font="font-['DejaVu_Sans',sans-serif] text-[18px] leading-[28px]" className="text-[#505068]">abc</T>
        </div>
        <T w={82} className="ml-[5px] mt-[2px]">Button</T>
        <svg width="19" height="10" viewBox="0 0 19 10" className="mt-[12px] ml-[28px]">
          <path d="M0 0H19L9.5 10Z" />
        </svg>
      </div>
      <div className="mt-[50px] ml-[29px] h-[60px] w-[14px] bg-[#808080]" />
      <div className="ml-[54px] flex w-[425px] flex-col items-center pt-[19px]">
        <T w={162} className="-ml-[2px]">normal speed</T>
        <div className="mt-[7px] flex h-[53px] w-full items-center">
          <div className="h-[8px] w-[202px] border-2 border-r-0 border-[#d9dcdc] bg-[#e9ecec]" />
          <div className="h-[53px] w-[14px] bg-[#0078d7]" />
          <div className="h-[8px] flex-1 border-2 border-l-0 border-[#d9dcdc] bg-[#e9ecec]" />
        </div>
        <T w={84} className="mt-[12px] -ml-[30px]">ticks: 0</T>
      </div>
      <div className="ml-[36px] w-[201px] pt-[40px]">
        <div className="flex">
          <svg width="31" height="32" viewBox="0 0 31 32">
            <rect width="31" height="32" rx="6" fill="#005fb8" />
            <path d="M8 16L13 22L23 11" fill="none" stroke="#fff" strokeWidth="2" />
          </svg>
          <T w={159} className="ml-[11px] mt-[2px]">view updates</T>
        </div>
        <div className="mt-[13px] ml-[4px] flex h-[50px] w-[193px] items-center border-2 border-[#b2b2bc] bg-[#fdfdfd] pl-[7px]">
          <T w={131}>continuous</T>
          <div className="mt-[8px] ml-[17px]">
            <Chevron />
          </div>
        </div>
      </div>
      <div className="mt-[50px] ml-[40px] h-[60px] w-[14px] bg-[#808080]" />
      <div className="mt-[55px] ml-[33px] flex h-[52px] w-[196px] rounded-[8px] border-2 border-b-[3px] border-[#d2d2d2] border-b-[#bcbcbc] bg-[#fdfdfd] pt-[10px] pl-[33px]">
        <T w={121}>Settings...</T>
      </div>
    </div>
  );
}

function LeftColumn() {
  return (
    <div className="relative z-10 flex w-[546px] shrink-0 flex-col pt-[27px] pl-[28px]">
      <div className={`h-[112px] w-[500px] shrink-0 pt-[12px] pl-[7px] ${TEAL}`}>
        <T w={100}>scenario</T>
        <div className={`mt-[6px] ml-[2px] flex h-[54px] w-[479px] pt-[12px] pl-[6px] ${TEAL}`}>
          <T w={424}>build_on_green_keep_nature_co...</T>
          <svg width="25" height="25" viewBox="0 0 25 25" className="mt-[2px] ml-[11px]">
            <path d="M1 1H24L12.5 24Z" fill="#c86464" stroke="#6b5050" strokeWidth="2" />
          </svg>
        </div>
      </div>
      <div className="mt-[53px] flex">
        <Btn box="w-[159px] pl-[45px]" w={67}>setup</Btn>
        <Btn box="ml-[14px] w-[156px] pl-[59px]" w={30}>go</Btn>
        <div className={`ml-[14px] flex h-[82px] w-[157px] pt-[32px] pl-[60px] ${PURPLE}`}>
          <T w={30}>go</T>
          <div className="mt-[15px] ml-[35px]">
            <Cycle />
          </div>
        </div>
      </div>
      <Btn box="mt-[15px] w-[424px] pl-[60px]" w={299}>check_near_nature_cent</Btn>
      <div className="relative mt-[14px] flex h-[130px] w-[538px] shrink-0 items-center bg-[#808080] pt-[2px] pl-[24px]">
        <div className="absolute top-0 left-0 h-[25px] w-[22px] bg-black" />
        <div className="absolute top-0 left-[267px] h-[25px] w-[23px] bg-black" />
        <div className="absolute top-[54px] left-0 h-[22px] w-[22px] bg-black" />
        <div className="absolute bottom-0 left-0 h-[23px] w-[22px] bg-black" />
        <div className="absolute bottom-0 left-[267px] h-[23px] w-[23px] bg-black" />
        <div className="absolute top-[25px] left-[538px] h-[29px] w-[22px] bg-[#808080]" />
        <div className="absolute top-[54px] left-[538px] h-[22px] w-[22px] bg-black" />
        <div className="absolute top-[76px] left-[538px] h-[31px] w-[22px] bg-[#808080]" />
        <div className={`flex h-[82px] w-[514px] pt-[32px] pl-[62px] ${PURPLE}`}>
          <T w={379}>read_2011_residents_from_csv</T>
        </div>
      </div>
      <div className="ml-[3px] mt-[70px] flex shrink-0 flex-col">
        <Btn box="w-[491px] pl-[149px]" w={185}>show_land_use</Btn>
        <div className="mt-[15px] flex">
          <Btn box="w-[191px] pl-[14px]" w={157}>show_district</Btn>
          <Btn box="ml-[14px] w-[286px] pl-[7px]" w={264}>show_nature_corridor</Btn>
        </div>
        <div className="mt-[16px] flex">
          <Btn box="w-[191px] pl-[26px]" w={133}>show_road</Btn>
          <Btn box="ml-[16px] w-[284px] pl-[27px]" w={228}>show_watercourse</Btn>
        </div>
      </div>
      <div className="mt-[65px] ml-[3px] flex flex-col gap-[10.6px]">
        <Slider label="n_steps" w={94} value="50" vw={31} thumb={10} />
        <Slider label="max_population" w={190} value="35000" vw={75} thumb={147} />
        <Slider label="low_pop_density_40m_40m" w={333} value="3" vw={15} thumb={0} />
        <Slider label="med_pop_density_40m_40m" w={343} value="6" vw={15} thumb={15} />
        <Slider label="high_pop_density_40m_40m" w={343} value="12" vw={30} thumb={43} />
        <Slider label="prob_build_low_density" w={282} value="50" vw={31} thumb={215} />
        <Slider box="-ml-[3px] w-[494px]" label="prob_build_med_density" w={293} value="50" vw={31} thumb={216} />
        <Slider box="-ml-[3px] w-[494px]" label="prob_build_high_density" w={293} value="50" vw={31} thumb={216} />
      </div>
    </div>
  );
}

function RightColumn() {
  return (
    <div className="ml-[19px] flex w-[655px] shrink-0 flex-col pt-[25px]">
      <Slider box="w-[616px]" label="prob_build_adjacent_to_existing_built" w={458} value="100" vw={44} thumb={567} />
      <Slider box="mt-[28px] w-[619px]" label="pop_threshold_for_adding_new_centrality" w={511} value="40" vw={30} thumb={220} />
      <Slider box="mt-[30px] w-[619px]" label="prob_new_neighboring_centrality" w={403} value="100" vw={44} thumb={570} />
      <Slider box="mt-[28px] w-[619px]" label="prob_new_isolated_centrality" w={356} value="0" vw={15} thumb={-13} />
      <Slider box="mt-[28px] w-[429px]" label="random_seed" w={164} value="0" vw={15} thumb={-13} />
      <Monitor box="mt-[41px] w-[256px]" label="total_population" w={196} value="26205" vw={77} />
      <Plot
        box="mt-[28px]"
        title={<T w={236} className="ml-[161px] font-bold">total_population</T>}
        axis="w-[83px] pr-[6px]"
        top="40000"
        topW={74}
        bottom="20000"
        bottomW={74}
        left="1"
        leftW={14}
        gap="pl-[81px]"
      />
      <Monitor box="mt-[27px] w-[499px]" label="built_near_nature_and_centrality (%)" w={458} value="0" vw={16} />
      <Plot
        box="mt-[26px]"
        title={<T w={373} className="ml-[78px] font-bold text-[#ff0000]">built near nature/cent(%)</T>}
        axis="w-[52px] pr-[5px]"
        top="100"
        topW={43}
        bottom="0"
        bottomW={15}
        left="0"
        leftW={15}
        gap="pl-[49px]"
      />
    </div>
  );
}

function CommandCenter() {
  return (
    <footer className="flex h-[145px] shrink-0 flex-col bg-[#f0f0f0] pl-[6px]">
      <div className="h-[5px] border-b-2 border-[#a8a8a8] bg-white" />
      <div className="flex h-[10px] items-end pl-[8px]">
        <svg width="45" height="9" viewBox="0 0 45 9">
          <path d="M0 9L7 1L14 9ZM28 1H44L36 9Z" />
        </svg>
      </div>
      <div className="flex h-[43px] w-[3030px] border-t-2 border-l-2 border-[#8a8a8a]">
        <div className="h-[41px] w-[2847px] bg-[#bcbce6] pt-[7px]">
          <T w={246} className="font-bold">Command Center</T>
        </div>
        <div className="mt-[5px] ml-[3px] flex h-[32px] w-[35px] items-center justify-center rounded-[6px] border-2 border-[#dcdcdc] bg-[#fdfdfd]">
          <svg width="24" height="22" viewBox="0 0 24 22">
            <path d="M9 0H24V13L19 9L10 17L15 22H0V9L5 13L14 5Z" />
          </svg>
        </div>
        <div className="mt-[5px] ml-[8px] h-[32px] w-[130px] rounded-[8px] border-2 border-[#d8d8d8] bg-[#fdfdfd] pl-[36px]">
          <T w={54} font="font-['DejaVu_Sans',sans-serif] text-[24px] leading-[24px]" className="-mt-[1px]">Clear</T>
        </div>
      </div>
      <div className="ml-[2px] h-[50px] w-[3026px] border-2 border-b-[3px] border-[#828790] bg-[#efefef] pt-[23px] pl-[43px]">
        <div className="h-[4px] w-[2164px] bg-[#858585]" />
      </div>
      <div className="ml-[2px] flex h-[33px]">
        <div className="w-[129px] border-r-2 border-[#8f90a8] bg-[#bcbce6] pt-[3px]">
          <T w={125}>observer&gt;</T>
        </div>
        <div className="w-[2849px] border-r-2 border-[#828790] bg-white" />
        <svg width="24" height="9" viewBox="0 0 24 9" className="mt-[13px] ml-[14px]">
          <path d="M0 0H24L12 9Z" />
        </svg>
      </div>
      <div className="-ml-[6px] h-[4px] bg-[#3c3e46]" />
    </footer>
  );
}

function Check() {
  return <div className="h-[32px] w-[32px] shrink-0 rounded-[7px] border-2 border-[#868686] bg-[#f6f6f6]" />;
}

function ButtonDialog() {
  return (
    <div className="absolute top-[841px] left-[1060px] z-20 h-[667px] w-[960px] rounded-[16px] bg-[#f0f0f0] shadow-[0_0_0_1px_rgba(90,90,90,.6),0_34px_56px_rgba(0,0,0,.34)]">
      <div className="flex h-[75px] rounded-t-[16px] border-b border-[#ececec] bg-[#f3f3f3] pt-[16px] pl-[22px]">
        <Arrow />
        <T w={88} font={SEGOE} className="ml-[5px] mt-[7px] text-[#8f8f8f]">Button</T>
        <div className="mt-[9px] ml-[755px]">
          <Cross />
        </div>
      </div>
      <div className="flex pt-[33px] pl-[32px]">
        <T w={105} className="mt-[11px]">Agent(s)</T>
        <div className="ml-[13px] flex h-[49px] w-[170px] items-center border-2 border-[#b2b2bc] bg-[#fdfdfd] pl-[7px]">
          <T w={107}>observer</T>
          <div className="mt-[8px] ml-[17px]">
            <Chevron />
          </div>
        </div>
        <div className="mt-[7px] ml-[38px] flex">
          <Check />
          <T w={95} className="ml-[8px] mt-[2px]">Forever</T>
        </div>
      </div>
      <div className="mt-[41px] ml-[30px] flex">
        <Check />
        <T w={269} className="ml-[9px] mt-[1px]">Disable until ticks start</T>
      </div>
      <T w={129} className="mt-[32px] ml-[20px]">Commands</T>
      <div className="mt-[3px] ml-[20px] flex h-[168px] w-[920px] justify-between border-2 border-b-[3px] border-[#8a8f98] bg-white pl-[8px]">
        <T w={492} font={MONO} className="mt-[10px]">read_2011_residents_from_csv</T>
        <div className="w-[41px] bg-[#efefef]" />
      </div>
      <div className="mt-[14px] ml-[20px] flex">
        <T w={156} className="mt-[11px]">Display name</T>
        <div className="ml-[14px] h-[50px] w-[750px] border-2 border-[#b2b2bc] bg-white" />
      </div>
      <div className="mt-[15px] ml-[20px] flex">
        <T w={124} className="mt-[11px]">Action key</T>
        <div className="ml-[14px] h-[50px] w-[54px] border-2 border-[#b2b2bc] bg-white" />
      </div>
      <div className="mt-[10px] ml-[330px] flex">
        <div className="flex h-[53px] w-[112px] rounded-[8px] border-2 border-[#0078d4] bg-[#f5faff] pt-[10px] pl-[33px]">
          <T w={37}>OK</T>
        </div>
        <div className="ml-[31px] flex h-[53px] w-[157px] rounded-[8px] border-2 border-b-[3px] border-[#d2d2d2] bg-[#fdfdfd] pt-[10px] pl-[33px]">
          <T w={81}>Cancel</T>
        </div>
      </div>
    </div>
  );
}

export default function App() {
  return (
    <div className="relative flex h-[2247px] w-[3042px] flex-col overflow-hidden bg-[#1e3f66] text-[#111]">
      <TitleBar />
      <MenuBar />
      <Tabs />
      <Toolbar />
      <main className="flex h-[1749px] shrink-0 bg-[#f0f0f0]">
        <div className="ml-[5px] flex w-[2990px] shrink-0 border-t-[3px] border-l-[2px] border-[#808080] bg-white pt-px">
          <LeftColumn />
          <div className="mt-[25px] h-[1670px] w-[1759px] shrink-0 border-2 border-t-[#8c8c8c] border-r-[4px] border-r-[#747474] border-b-[4px] border-b-[#747474] border-l-[#8c8c8c]">
            <div className="h-full w-full border-t-[5px] border-l-[6px] border-white">
              <div className="h-full w-full border-t-[5px] border-r-[5px] border-b-[4px] border-l border-[#b0b0b0]">
                <World />
              </div>
            </div>
          </div>
          <RightColumn />
        </div>
      </main>
      <CommandCenter />
      <ButtonDialog />
    </div>
  );
}
